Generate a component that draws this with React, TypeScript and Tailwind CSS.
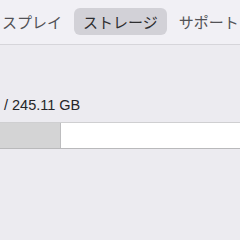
import React from 'react';

const tabs = [
  { id: 'display', title: 'ディスプレイ' },
  { id: 'storage', title: 'ストレージ' },
  { id: 'support', title: 'サポート' },
];

const App: React.FC = () => {
  const active = 'storage';

  return (
    <div
      className="w-[240px] h-[240px] overflow-hidden bg-[#ecebf0]"
      style={{ fontFamily: '"Liberation Sans", "Noto Sans CJK JP", sans-serif' }}
    >
      {/* Toolbar with tabs */}
      <div className="h-[45px] bg-[#f1f0f5] border-b border-[#d6d5da] pt-[8px]">
        <div className="flex gap-[3px] ml-[-36px] whitespace-nowrap">
          {tabs.map(tab => (
            <div
              key={tab.id}
              className={`h-[27px] px-[9px] rounded-[6px] flex items-center text-[15px] leading-none ${
                tab.id === active ? 'bg-[#d2d1d7] text-[#2e2e30]' : 'text-[#525256]'
              }`}
              style={{ fontFamily: '"Noto Sans CJK JP", sans-serif' }}
            >
              {tab.title}
            </div>
          ))}
        </div>
      </div>

      {/* Storage info */}
      <div className="pt-[53px] text-[14.5px] leading-none text-[#262628] whitespace-nowrap">
        <span className="ml-[-21px]">GB / 245.11 GB</span>
      </div>

      <div className="mt-[9px] h-[27px] flex border-t border-[#cfcfd1] border-b border-b-[#b9b9bb] bg-white">
        <div className="w-[61px] bg-[#d4d4d5] border-r border-[#bdbdbf]" />
        <div className="flex-1" />
      </div>
    </div>
  );
};

export default App;
